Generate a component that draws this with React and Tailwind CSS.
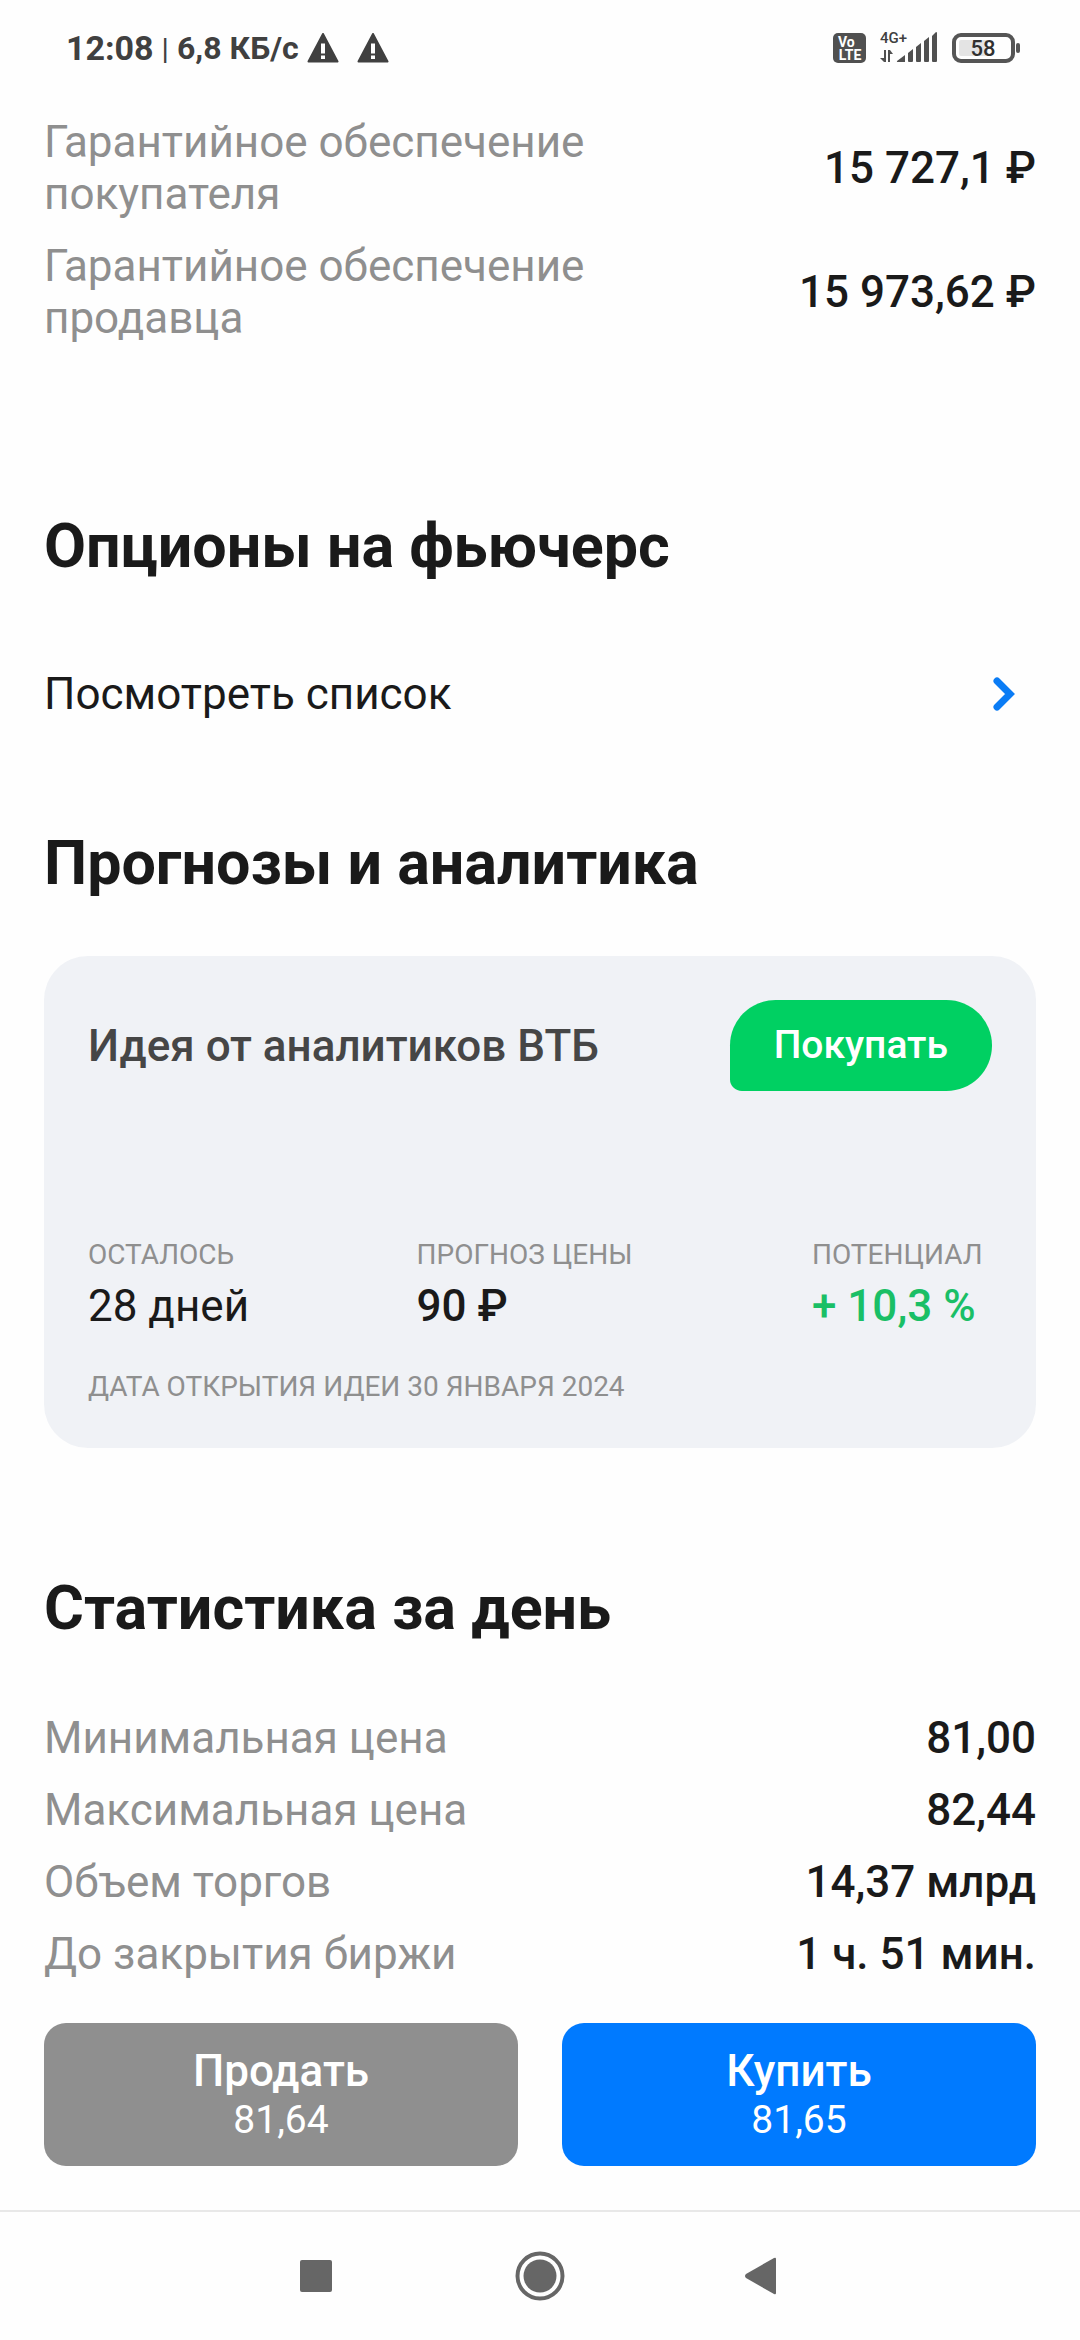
import React from 'react';

const margins = [
  { label: 'Гарантийное обеспечение покупателя', value: '15 727,1 ₽' },
  { label: 'Гарантийное обеспечение продавца', value: '15 973,62 ₽' },
];

const dayStats = [
  { label: 'Минимальная цена', value: '81,00' },
  { label: 'Максимальная цена', value: '82,44' },
  { label: 'Объем торгов', value: '14,37 млрд' },
  { label: 'До закрытия биржи', value: '1 ч. 51 мин.' },
];

const ideaFacts = [
  { label: 'Осталось', value: '28 дней', style: 'text-[#1a1a1a]', width: 'min-w-[160px]' },
  { label: 'Прогноз цены', value: '90 ₽', style: 'font-medium text-[#1a1a1a]', width: 'min-w-[228px]' },
  { label: 'Потенциал', value: '+ 10,3 %', style: 'font-medium text-[#1abf66]', width: 'min-w-[180px]' },
];

function WarningIcon() {
  return (
    <svg className="h-[30px] w-8" viewBox="0 0 32 30" aria-hidden="true">
      <path d="M16 1 30.5 28.5H1.5Z" fill="#404040" stroke="#404040" strokeWidth="2" strokeLinejoin="round" />
      <path d="M14 10.5h4v10h-4zM14 22.5h4v3.5h-4z" fill="#fff" />
    </svg>
  );
}

function SignalIcon() {
  return (
    <svg className="h-9 w-[58px]" viewBox="0 0 58 36" fill="#505050" aria-hidden="true">
      <text x="0" y="13" fontSize="15" fontWeight="500" fill="#404040">4G+</text>
      <path d="M4 20h2v12H4L0 28h4zM8 20h2l3 4h-3v8H8z" />
      <path d="M17 31 25 25v7h-7.500q-1 0-.5-1zM28 23l5-4v12q0 1-1 1h-3q-1 0-1-1zM36 17l5-4v18q0 1-1 1h-3q-1 0-1-1zM44 11l5-4v24q0 1-1 1h-3q-1 0-1-1zM52 6l4-4q1 0 1 1v28q0 1-1 1h-3q-1 0-1-1z" />
    </svg>
  );
}

function BatteryIcon() {
  return (
    <svg className="h-[30px] w-[70px]" viewBox="0 0 70 30" aria-hidden="true">
      <rect x="2" y="2" width="59" height="26" rx="7" fill="none" stroke="#555" strokeWidth="4" />
      <rect x="7" y="7" width="29" height="16" rx="2" fill="#e4e4e4" />
      <rect x="64" y="10" width="4" height="10" rx="2" fill="#555" />
      <text x="31" y="23" fontSize="22" fontWeight="500" textAnchor="middle" fill="#303030">58</text>
    </svg>
  );
}

function StatusBar() {
  return (
    <header className="flex h-24 items-center justify-between pl-[66px] pr-[58px] text-[#404040]">
      <div className="flex items-center gap-2">
        <span className="text-[34px] font-bold">12:08</span>
        <span className="text-[30px]">|</span>
        <span className="text-[32px] font-bold">6,8 КБ/c</span>
        <div className="flex items-center gap-[18px]">
          <WarningIcon />
          <WarningIcon />
        </div>
      </div>
      <div className="flex items-center gap-[14px]">
        <svg className="h-[30px] w-[33px]" viewBox="0 0 33 30" aria-label="VoLTE">
          <rect width="33" height="30" rx="5" fill="#505050" />
          <text x="5" y="14" fontSize="14" fontWeight="700" fill="#fff">Vo</text>
          <text x="17" y="27" fontSize="14" fontWeight="700" textAnchor="middle" fill="#fff">LTE</text>
        </svg>
        <SignalIcon />
        <BatteryIcon />
      </div>
    </header>
  );
}

function InfoRows({ rows }) {
  return (
    <dl className="space-y-5 text-[44px] leading-[52px]">
      {rows.map(row => (
        <div key={row.label} className="flex items-center justify-between">
          <dt className="max-w-[620px] text-[#8f8f8f]">{row.label}</dt>
          <dd className="whitespace-nowrap font-medium">{row.value}</dd>
        </div>
      ))}
    </dl>
  );
}

function SectionTitle({ children }) {
  return <h2 className="text-[61px] font-bold leading-[70px]">{children}</h2>;
}

function IdeaCard() {
  return (
    <article className="mt-[58px] rounded-[44px] bg-[#f0f2f6] p-11">
      <div className="flex items-center justify-between">
        <h3 className="text-[44px] font-medium leading-[52px] text-[#464646]">Идея от аналитиков ВТБ</h3>
        <button className="rounded-[46px] rounded-bl-[12px] bg-[#00d062] px-11 py-[22px] text-[39px] font-medium leading-[47px] text-white">
          Покупать
        </button>
      </div>
      <dl className="mt-[147px] flex justify-between">
        {ideaFacts.map(fact => (
          <div key={fact.label} className={fact.width}>
            <dt className="text-[28px] uppercase leading-[34px] text-[#8f8f8f]">{fact.label}</dt>
            <dd className={`mt-2 text-[44px] leading-[52px] ${fact.style}`}>{fact.value}</dd>
          </div>
        ))}
      </dl>
      <p className="mt-[38px] text-[28px] uppercase leading-[34px] text-[#8f8f8f]">Дата открытия идеи 30 января 2024</p>
    </article>
  );
}

function TradeButton({ title, price, color }) {
  return (
    <button className={`flex flex-1 flex-col items-center rounded-[22px] py-[22px] text-white ${color}`}>
      <span className="text-[44px] font-medium leading-[52px]">{title}</span>
      <span className="text-[39px] leading-[47px]">{price}</span>
    </button>
  );
}

function SystemNav() {
  return (
    <nav className="flex h-[130px] items-center justify-center gap-[170px] border-t-2 border-[#e8e8e8]">
      <button aria-label="Недавние">
        <svg className="size-[50px]" viewBox="0 0 50 50">
          <rect x="5" y="9" width="32" height="32" rx="2" fill="#666" />
        </svg>
      </button>
      <button aria-label="Домой">
        <svg className="size-[50px]" viewBox="0 0 50 50">
          <circle cx="25" cy="25" r="22.500" fill="none" stroke="#666" strokeWidth="4" />
          <circle cx="25" cy="25" r="16.500" fill="#666" />
        </svg>
      </button>
      <button aria-label="Назад">
        <svg className="size-[50px]" viewBox="0 0 50 50">
          <path d="M41 8v34q0 2-2 1L11 27q-2-2 0-4L39 7q2-1 2 1Z" fill="#666" />
        </svg>
      </button>
    </nav>
  );
}

export default function App() {
  return (
    <div className="flex min-h-screen flex-col bg-[#fefefe] font-['Roboto','Noto_Sans',sans-serif] text-[#1a1a1a]">
      <StatusBar />

      <main className="flex-1 px-11 pb-[43px] pt-5">
        <InfoRows rows={margins} />

        {/* Options */}
        <section className="mt-[167px]">
          <SectionTitle>Опционы на фьючерс</SectionTitle>
          <a href="#options" className="mt-[87px] flex items-center justify-between pr-[18px] text-[44px] leading-[52px]">
            Посмотреть список
            <svg className="h-9 w-7" viewBox="0 0 28 36" fill="none" aria-hidden="true">
              <path d="M7 5 20 18 7 31" stroke="#0a7cf5" strokeWidth="7" strokeLinecap="round" />
            </svg>
          </a>
        </section>

        {/* Analytics */}
        <section className="mt-[108px]">
          <SectionTitle>Прогнозы и аналитика</SectionTitle>
          <IdeaCard />
        </section>

        {/* Day stats */}
        <section className="mt-[125px] space-y-[69px]">
          <SectionTitle>Статистика за день</SectionTitle>
          <InfoRows rows={dayStats} />
        </section>
      </main>

      <footer>
        <div className="flex gap-11 px-11 pb-11">
          <TradeButton title="Продать" price="81,64" color="bg-[#8f8f8f]" />
          <TradeButton title="Купить" price="81,65" color="bg-[#007aff]" />
        </div>
        <SystemNav />
      </footer>
    </div>
  );
}
